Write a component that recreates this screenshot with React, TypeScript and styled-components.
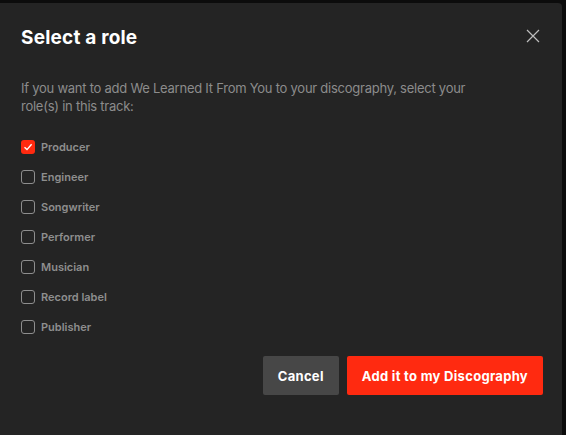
import React, { useState } from "react";
import styled, { createGlobalStyle } from "styled-components";

const GlobalStyle = createGlobalStyle`
  html, body {
    margin: 0;
    padding: 0;
    background: #0c0c0c;
    width: 566px;
    height: 435px;
    overflow: hidden;
  }
  * {
    box-sizing: border-box;
  }
`;

const Backdrop = styled.div`
  width: 566px;
  height: 435px;
  padding: 3px 4px 0 0;
`;

const Dialog = styled.div`
  height: 100%;
  margin-left: -10px;
  padding: 23px 19px 0 31px;
  background: #242424;
  border-radius: 4px 4px 0 0;
  font-family: Inter, "Noto Sans", sans-serif;
`;

const Header = styled.div`
  display: flex;
  align-items: center;
  justify-content: space-between;
`;

const Title = styled.h2`
  margin: 0;
  font-size: 19px;
  line-height: 24px;
  font-weight: 700;
  color: #ffffff;
  letter-spacing: 0.2px;
`;

const CloseButton = styled.button`
  display: flex;
  padding: 0;
  margin: -4px 3px 0 0;
  border: none;
  background: none;
  cursor: pointer;
`;

const Description = styled.p`
  margin: 29px 0 0;
  font-size: 13px;
  line-height: 18px;
  letter-spacing: -0.25px;
  color: #8c8c8c;
  max-width: 470px;
`;

const RoleList = styled.div`
  display: flex;
  flex-direction: column;
  gap: 16px;
  margin-top: 25px;
`;

const RoleRow = styled.label`
  display: flex;
  align-items: center;
  gap: 6px;
  height: 14px;
  cursor: pointer;
`;

const Box = styled.span<{ $checked: boolean }>`
  display: flex;
  align-items: center;
  justify-content: center;
  width: 14px;
  height: 14px;
  border-radius: 3px;
  border: ${(p) => (p.$checked ? "none" : "1px solid #8e8e8e")};
  background: ${(p) => (p.$checked ? "#ff2a10" : "transparent")};
`;

const RoleName = styled.span`
  font-size: 11px;
  font-weight: 600;
  color: #8e8e8e;
`;

const Actions = styled.div`
  display: flex;
  justify-content: flex-end;
  gap: 8px;
  margin-top: 22px;
`;

const Button = styled.button<{ $primary?: boolean }>`
  height: 39px;
  padding: 0 15px;
  border: none;
  border-radius: 2px;
  font-family: inherit;
  font-size: 13px;
  font-weight: 700;
  letter-spacing: 0.3px;
  color: #ffffff;
  background: ${(p) => (p.$primary ? "#ff2a10" : "#474747")};
  cursor: pointer;
`;

const roles = [
  "Producer",
  "Engineer",
  "Songwriter",
  "Performer",
  "Musician",
  "Record label",
  "Publisher",
];

export default function App() {
  const [selected, setSelected] = useState<string[]>(["Producer"]);

  const toggle = (role: string) => {
    setSelected((s) => (s.includes(role) ? s.filter((r) => r !== role) : [...s, role]));
  };

  return (
    <Backdrop>
      <GlobalStyle />
      <Dialog>
        <Header>
          <Title>Select a role</Title>
          <CloseButton aria-label="Close">
            <svg width="14" height="14" viewBox="0 0 14 14">
              <path d="M1 1L13 13M13 1L1 13" stroke="#bdbdbd" strokeWidth="1.2" />
            </svg>
          </CloseButton>
        </Header>
        <Description>
          If you want to add We Learned It From You to your discography, select your
          role(s) in this track:
        </Description>
        <RoleList>
          {roles.map((role) => {
            const checked = selected.includes(role);
            return (
              <RoleRow key={role} onClick={() => toggle(role)}>
                <Box $checked={checked}>
                  {checked && (
                    <svg width="10" height="10" viewBox="0 0 10 10">
                      <path d="M1.5 5.2L4 7.6L8.6 2.2" stroke="#fff" strokeWidth="1.4" fill="none" />
                    </svg>
                  )}
                </Box>
                <RoleName>{role}</RoleName>
              </RoleRow>
            );
          })}
        </RoleList>
        <Actions>
          <Button>Cancel</Button>
          <Button $primary>Add it to my Discography</Button>
        </Actions>
      </Dialog>
    </Backdrop>
  );
}
